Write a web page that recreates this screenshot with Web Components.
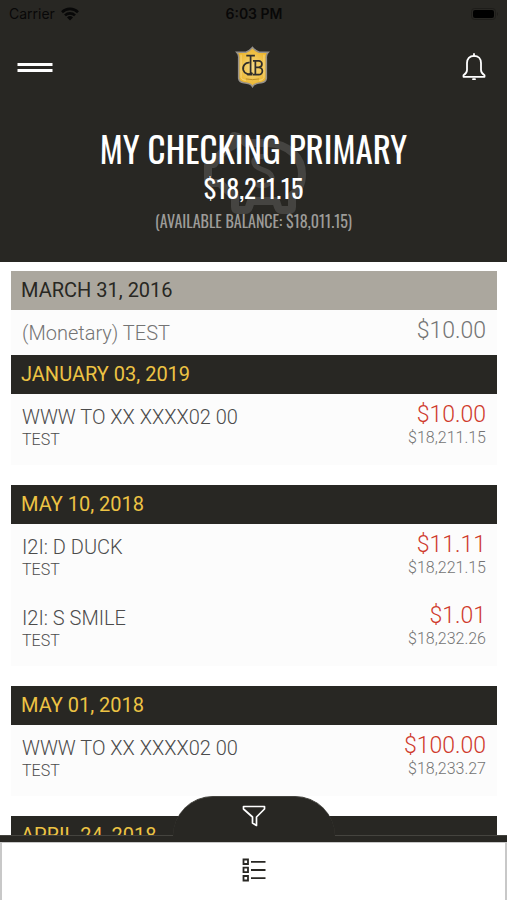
<!DOCTYPE html>
<html lang="en">
<head>
<meta charset="utf-8">
<meta name="viewport" content="width=device-width, initial-scale=1">
<title>My Checking Primary</title>
<style>
  :root {
    --dark: #282723;
    --gold: #edc344;
    --red: #cf3a2c;
    --gray: #747474;
  }
  body {
    margin: 0;
    background: #fff;
    font-family: Roboto, "Liberation Sans", sans-serif;
  }
</style>
</head>
<body>

<bank-app>
  <status-bar slot="top" carrier="Carrier" time="6:03 PM"></status-bar>
  <nav-bar slot="top"></nav-bar>
  <account-summary slot="top" name="MY CHECKING PRIMARY" balance="$18,211.15" available="(AVAILABLE BALANCE: $18,011.15)"></account-summary>

  <day-group date="MARCH 31, 2016" pending>
    <transaction-item name="(Monetary) TEST" amount="$10.00" pending></transaction-item>
  </day-group>
  <day-group date="JANUARY 03, 2019">
    <transaction-item name="WWW TO XX XXXX02 00" note="TEST" amount="$10.00" balance="$18,211.15"></transaction-item>
  </day-group>
  <day-group date="MAY 10, 2018">
    <transaction-item name="I2I: D DUCK" note="TEST" amount="$11.11" balance="$18,221.15"></transaction-item>
    <transaction-item name="I2I: S SMILE" note="TEST" amount="$1.01" balance="$18,232.26"></transaction-item>
  </day-group>
  <day-group date="MAY 01, 2018">
    <transaction-item name="WWW TO XX XXXX02 00" note="TEST" amount="$100.00" balance="$18,233.27"></transaction-item>
  </day-group>
  <day-group date="APRIL 24, 2018"></day-group>

  <bottom-bar slot="bottom"></bottom-bar>
</bank-app>

<script>
// App shell: fixed header and footer, the list scrolls between them
class BankApp extends HTMLElement {
  constructor() {
    super();
    this.attachShadow({ mode: "open" });
    this.shadowRoot.innerHTML = `
      <style>
        :host {
          display: flex;
          flex-direction: column;
          height: 100vh;
        }
        header {
          background: var(--dark);
        }
        main {
          flex: 1;
          min-height: 0;
          overflow-y: auto;
          scrollbar-width: none;
          padding: 9px 10px 0 11px;
        }
      </style>
      <header><slot name="top"></slot></header>
      <main><slot></slot></main>
      <slot name="bottom"></slot>
    `;
  }
}

class StatusBar extends HTMLElement {
  constructor() {
    super();
    this.attachShadow({ mode: "open" });
    this.shadowRoot.innerHTML = `
      <style>
        :host {
          display: grid;
          grid-template-columns: 1fr auto 1fr;
          align-items: center;
          height: 28px;
          padding: 0 8px 0 9px;
          color: #080808;
          font: 14px/16px Inter, "Liberation Sans", sans-serif;
        }
        .carrier {
          display: flex;
          align-items: center;
          gap: 6px;
        }
        .time {
          font-weight: 600;
        }
        .battery {
          justify-self: end;
        }
        svg {
          display: block;
        }
      </style>
      <div class="carrier">
        <span class="name"></span>
        <svg width="18" height="14" viewBox="0 0 18 14" fill="none" stroke="#080808" stroke-width="2.6">
          <path d="M1 5.2a11.4 11.4 0 0 1 16 0"/>
          <path d="M4 8.4a7.2 7.2 0 0 1 10 0"/>
          <path d="M9 13.6 6 10.4a4.3 4.3 0 0 1 6 0z" fill="#080808" stroke="none"/>
        </svg>
      </div>
      <div class="time"></div>
      <svg class="battery" width="28" height="12" viewBox="0 0 28 12">
        <rect x=".5" y=".5" width="24" height="11" rx="3" fill="none" stroke="#1e1d1a"/>
        <rect x="2" y="2" width="21" height="8" rx="2" fill="#000"/>
        <path d="M26 4v4q2-2 0-4" fill="#1e1d1a"/>
      </svg>
    `;
  }

  connectedCallback() {
    this.shadowRoot.querySelector(".name").textContent = this.getAttribute("carrier");
    this.shadowRoot.querySelector(".time").textContent = this.getAttribute("time");
  }
}

class NavBar extends HTMLElement {
  constructor() {
    super();
    this.attachShadow({ mode: "open" });
    this.shadowRoot.innerHTML = `
      <style>
        :host {
          display: grid;
          grid-template-columns: 1fr auto 1fr;
          align-items: center;
          height: 78px;
          padding: 0 20px 0 17px;
        }
        button {
          padding: 0;
          border: 0;
          background: none;
          cursor: pointer;
        }
        .menu {
          justify-self: start;
        }
        .alerts {
          justify-self: end;
        }
        svg {
          display: block;
        }
      </style>
      <button class="menu" aria-label="Menu">
        <svg width="36" height="12" viewBox="0 0 36 12" fill="#fff">
          <rect x=".5" y="2" width="35" height="3"/>
          <rect x=".5" y="8" width="35" height="3"/>
        </svg>
      </button>
      <svg width="35" height="42" viewBox="0 0 36 44" role="img" aria-label="Bank logo">
        <defs>
          <radialGradient id="oro">
            <stop offset="0" stop-color="#f6da86"/>
            <stop offset="1" stop-color="#ecb52c"/>
          </radialGradient>
        </defs>
        <path d="M18 1.500Q21 5 25 6.500H34.500Q32 9 32.500 13V34Q32 38 27 38.500Q20 39 18 42.500Q16 39 9 38.500Q4 38 3.500 34V13Q4 9 1.500 6.500H11Q15 5 18 1.500Z" fill="url(#oro)" stroke="#96918a" stroke-width="1.600"/>
        <path d="M6 9v24q1 3 5 3M30 9v24q-1 3-5 3" fill="none" stroke="#f7e3a4" stroke-width=".7"/>
        <g fill="none" stroke="#302e2b" stroke-width="1.800">
          <path d="M11.500 10H20.500M16 10V30M12.500 30H18"/>
          <path d="M15 17.500a6 6 0 1 0 3 10.500"/>
          <path d="M21 15.500V30M18.500 15.500H24.500a3.400 3.400 0 0 1 0 6.800H21M24.500 22.300a3.800 3.800 0 0 1 0 7.700H18.500"/>
        </g>
        <path d="M11 34.500q7 1.500 14 0" fill="none" stroke="#b98a24"/>
      </svg>
      <button class="alerts" aria-label="Alerts">
        <svg width="26" height="28" viewBox="0 0 26 28" fill="none" stroke="#fff" stroke-width="1.800" stroke-linejoin="round">
          <path d="M13 2.800C8.500 2.800 6 6 6 10v7q0 3-3.500 5.200v1.600h21v-1.600Q20 20 20 17v-7c0-4-2.500-7.200-7-7.200z"/>
          <path d="M13 3V1M12 26.200h2" stroke-linecap="round"/>
        </svg>
      </button>
    `;
  }
}

class AccountSummary extends HTMLElement {
  constructor() {
    super();
    this.attachShadow({ mode: "open" });
    this.shadowRoot.innerHTML = `
      <style>
        :host {
          display: grid;
          justify-items: center;
          padding: 19px 16px 25px;
          color: #fff;
          font-family: Oswald, "Liberation Sans Narrow", "Liberation Sans", sans-serif;
          text-align: center;
        }
        .piggy, .text {
          grid-area: 1 / 1;
        }
        .piggy {
          padding-top: 5px;
        }
        /* keeps the text above the drawing */
        .text {
          z-index: 1;
        }
        h1, p {
          margin: 0;
          font-weight: 400;
        }
        h1 {
          font-size: 35px;
          line-height: 46px;
        }
        .balance {
          font-size: 26px;
          line-height: 34px;
        }
        .available {
          color: #9d9c99;
          font-size: 16px;
          line-height: 32px;
        }
      </style>
      <svg class="piggy" width="108" height="86" viewBox="0 0 108 86" fill="none" stroke="#454441" stroke-width="8" stroke-linejoin="round" stroke-linecap="round" aria-hidden="true">
        <path d="M34 15V6Q41 7 46 13H68C88 14 102 27 102 44C102 54 98 61 92 65V77Q92 80 89 80H82Q79 80 78 77L76 71H51L49 77Q48 80 45 80H38Q35 80 35 77V66C29 62 24 58 20 53H8V34H14C18 25 25 19 34 15Z"/>
        <path d="M66 27C57 25 51 30 55 35C59 41 70 39 72 47C73 54 63 58 56 54" stroke-width="5"/>
      </svg>
      <div class="text">
        <h1></h1>
        <p class="balance"></p>
        <p class="available"></p>
      </div>
    `;
  }

  connectedCallback() {
    this.shadowRoot.querySelector("h1").textContent = this.getAttribute("name");
    this.shadowRoot.querySelector(".balance").textContent = this.getAttribute("balance");
    this.shadowRoot.querySelector(".available").textContent = this.getAttribute("available");
  }
}

// One day of transactions, "pending" gives the gray title
class DayGroup extends HTMLElement {
  constructor() {
    super();
    this.attachShadow({ mode: "open" });
    this.shadowRoot.innerHTML = `
      <style>
        :host {
          display: block;
          margin-bottom: 20px;
        }
        :host([pending]) {
          margin-bottom: 0;
        }
        h2 {
          margin: 0;
          padding: 0 10px;
          background: var(--dark);
          color: var(--gold);
          font-size: 20px;
          font-weight: 400;
          line-height: 39px;
        }
        :host([pending]) h2 {
          background: #aba79e;
          color: var(--dark);
        }
        .items {
          background: #fcfcfc;
        }
      </style>
      <h2></h2>
      <div class="items"><slot></slot></div>
    `;
  }

  connectedCallback() {
    this.shadowRoot.querySelector("h2").textContent = this.getAttribute("date");
  }
}

class TransactionItem extends HTMLElement {
  constructor() {
    super();
    this.attachShadow({ mode: "open" });
    this.shadowRoot.innerHTML = `
      <style>
        :host {
          display: flex;
          justify-content: space-between;
          padding: 9px 11px 16px;
          color: #4c4c4c;
          font-weight: 300;
        }
        :host([pending]) {
          padding-bottom: 8px;
          color: var(--gray);
        }
        p {
          margin: 0;
        }
        .name {
          font-size: 20px;
          line-height: 28px;
        }
        .note {
          font-size: 16px;
          line-height: 18px;
        }
        .right {
          text-align: right;
        }
        .amount {
          color: var(--red);
          font-size: 23px;
          line-height: 24px;
        }
        :host([pending]) .amount {
          color: var(--gray);
        }
        .balance {
          color: var(--gray);
          font-size: 16px;
          line-height: 22px;
        }
      </style>
      <div class="left">
        <p class="name"></p>
        <p class="note"></p>
      </div>
      <div class="right">
        <p class="amount"></p>
        <p class="balance"></p>
      </div>
    `;
  }

  connectedCallback() {
    for (const campo of ["name", "note", "amount", "balance"]) {
      const p = this.shadowRoot.querySelector("." + campo);
      if (this.getAttribute(campo)) {
        p.textContent = this.getAttribute(campo);
      } else {
        p.style = "display: none";
      }
    }
  }
}

class BottomBar extends HTMLElement {
  constructor() {
    super();
    this.attachShadow({ mode: "open" });
    this.shadowRoot.innerHTML = `
      <style>
        :host {
          display: block;
          position: relative;
          border-top: 6px solid var(--dark);
          box-shadow: 0 -1px 0 #45443f;
        }
        button {
          border: 0;
          background: none;
          cursor: pointer;
        }
        svg {
          display: block;
        }
        /* tab that rises over the list */
        .filter {
          position: absolute;
          bottom: 100%;
          left: 50%;
          width: 162px;
          height: 46px;
          margin-left: -81px;
          padding: 0 0 8px;
          display: flex;
          justify-content: center;
          align-items: center;
          border: 1px solid #45443f;
          border-width: 1px 0 0;
          border-radius: 40px 40px 0 0;
          background: var(--dark);
        }
        .bar {
          display: flex;
          justify-content: center;
          height: 58px;
          box-sizing: border-box;
          border: solid #c8c8c8;
          border-width: 1px 2px 0;
          background: #fff;
        }
        .list {
          padding: 0 16px 4px;
        }
      </style>
      <button class="filter" aria-label="Filter">
        <svg width="24" height="22" viewBox="0 0 24 22" fill="none" stroke="#fff" stroke-width="1.700" stroke-linejoin="round">
          <path d="M1.500 1.500h21v2.500L14.500 12v8.500l-4-2.500V12L1.500 4z"/>
        </svg>
      </button>
      <div class="bar">
        <button class="list" aria-label="Transactions">
          <svg width="24" height="24" viewBox="0 0 24 24" fill="none" stroke="#282723" stroke-width="1.800">
            <path d="M1.500 1.500h4.500v4.500h-4.500zM1.500 9.700h4.500v4.500h-4.500zM1.500 18h4.500v4.500h-4.500z"/>
            <path d="M9 3.800h14.500M9 12h14.500M9 20.200h14.500"/>
          </svg>
        </button>
      </div>
    `;
  }
}

customElements.define("bank-app", BankApp);
customElements.define("status-bar", StatusBar);
customElements.define("nav-bar", NavBar);
customElements.define("account-summary", AccountSummary);
customElements.define("day-group", DayGroup);
customElements.define("transaction-item", TransactionItem);
customElements.define("bottom-bar", BottomBar);
</script>
</body>
</html>
